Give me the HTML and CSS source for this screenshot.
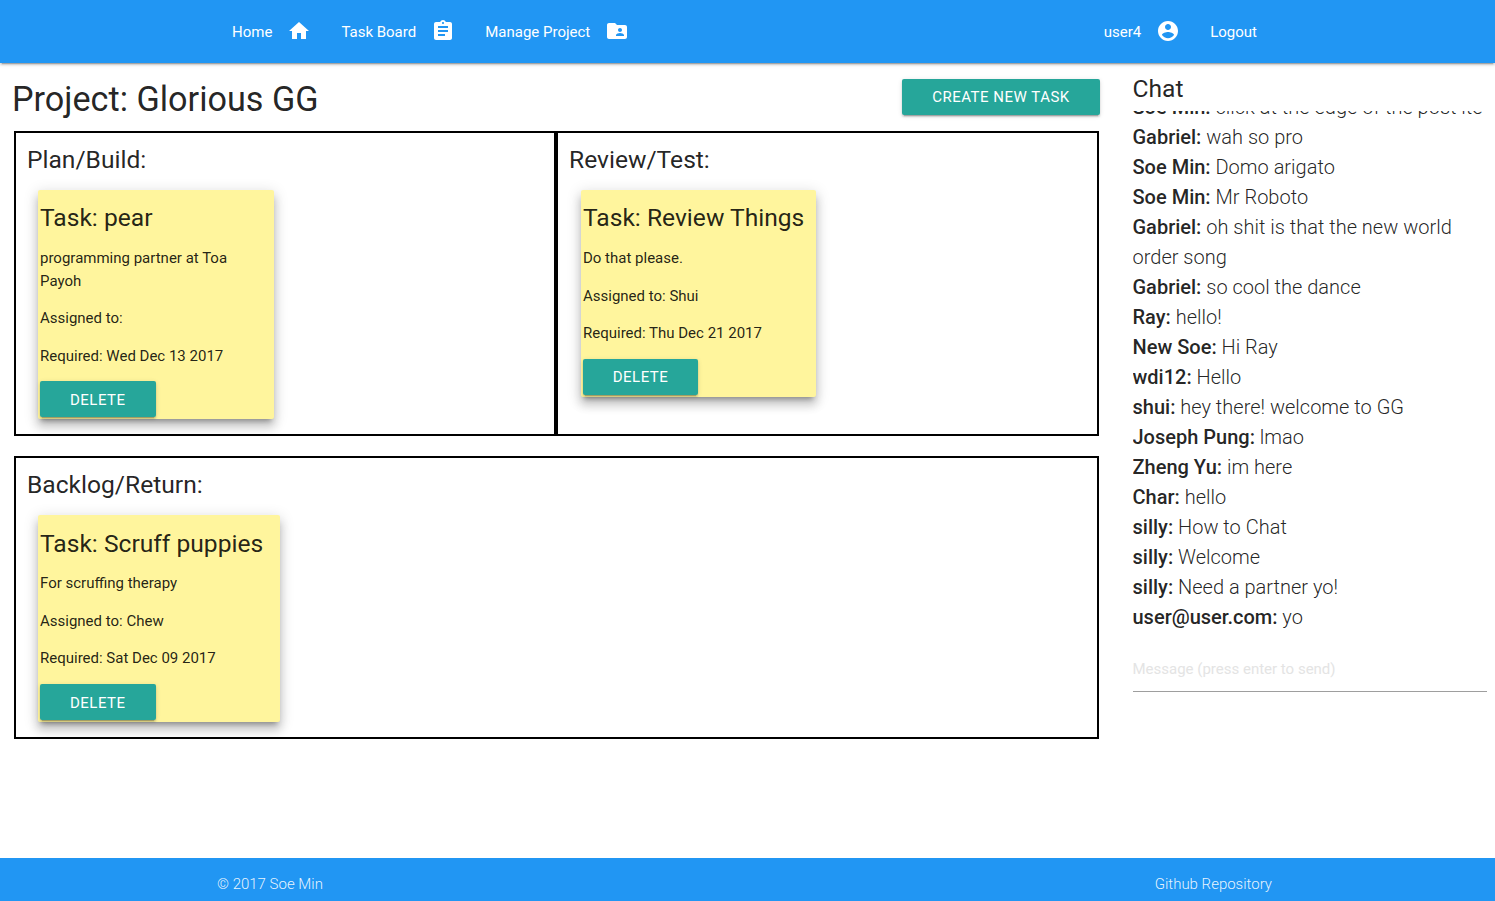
FILE: index.html
```html
<!DOCTYPE html>
<html lang="en">
<head>
    <meta charset="UTF-8">
    <meta name="viewport" content="width=device-width, initial-scale=1.0">
    <title>Project: Glorious GG</title>
    <link rel="stylesheet" href="styles.css">
</head>
<body>
    <nav class="topnav">
        <ul class="nav-list">
            <li><a href="#">Home
                <svg class="nav-icon" viewBox="0 0 24 24"><path d="M10 20v-6h4v6h5v-8h3L12 3 2 12h3v8z"/></svg></a></li>
            <li><a href="#">Task Board
                <svg class="nav-icon" viewBox="0 0 24 24"><path d="M19 3h-4.18C14.4 1.84 13.3 1 12 1c-1.3 0-2.4.84-2.82 2H5c-1.1 0-2 .9-2 2v14c0 1.1.9 2 2 2h14c1.1 0 2-.9 2-2V5c0-1.1-.9-2-2-2zm-7 0c.55 0 1 .45 1 1s-.45 1-1 1-1-.45-1-1 .45-1 1-1zm2 14H7v-2h7v2zm3-4H7v-2h10v2zm0-4H7V7h10v2z"/></svg></a></li>
            <li><a href="#">Manage Project
                <svg class="nav-icon" viewBox="0 0 24 24"><path d="M20 6h-8l-2-2H4c-1.1 0-1.99.9-1.99 2L2 18c0 1.1.9 2 2 2h16c1.1 0 2-.9 2-2V8c0-1.1-.9-2-2-2zm-5 3c1.1 0 2 .9 2 2s-.9 2-2 2-2-.9-2-2 .9-2 2-2zm4 8h-8v-1c0-1.33 2.67-2 4-2s4 .67 4 2v1z"/></svg></a></li>
        </ul>
        <ul class="nav-list">
            <li><a href="#">user4
                <svg class="nav-icon" viewBox="0 0 24 24"><path d="M12 2C6.48 2 2 6.48 2 12s4.48 10 10 10 10-4.48 10-10S17.52 2 12 2zm0 3c1.66 0 3 1.34 3 3s-1.34 3-3 3-3-1.34-3-3 1.34-3 3-3zm0 14.2c-2.5 0-4.71-1.28-6-3.22.03-1.99 4-3.08 6-3.08 1.99 0 5.97 1.09 6 3.08-1.29 1.94-3.5 3.22-6 3.22z"/></svg></a></li>
            <li><a href="#">Logout</a></li>
        </ul>
    </nav>

    <main class="page">
        <section class="board">
            <div class="board-head">
                <h1>Project: Glorious GG</h1>
                <button class="btn btn-create" type="button">Create new task</button>
            </div>

            <div class="lane-row">
                <div class="lane">
                    <h2>Plan/Build:</h2>
                    <div class="task">
                        <h3>Task: pear</h3>
                        <p>programming partner at Toa Payoh</p>
                        <p>Assigned to:</p>
                        <p>Required: Wed Dec 13 2017</p>
                        <button class="btn" type="button">Delete</button>
                    </div>
                </div>
                <div class="lane lane-right">
                    <h2>Review/Test:</h2>
                    <div class="task">
                        <h3>Task: Review Things</h3>
                        <p>Do that please.</p>
                        <p>Assigned to: Shui</p>
                        <p>Required: Thu Dec 21 2017</p>
                        <button class="btn" type="button">Delete</button>
                    </div>
                </div>
            </div>

            <div class="lane lane-backlog">
                <h2>Backlog/Return:</h2>
                <div class="task task-wide">
                    <h3>Task: Scruff puppies</h3>
                    <p>For scruffing therapy</p>
                    <p>Assigned to: Chew</p>
                    <p>Required: Sat Dec 09 2017</p>
                    <button class="btn" type="button">Delete</button>
                </div>
            </div>
        </section>

        <aside class="chat">
            <h2>Chat</h2>
            <div class="messages">
                <p><b>Soe Min:</b> click at the edge of the post ite</p>
                <p><b>Gabriel:</b> wah so pro</p>
                <p><b>Soe Min:</b> Domo arigato</p>
                <p><b>Soe Min:</b> Mr Roboto</p>
                <p><b>Gabriel:</b> oh shit is that the new world order song</p>
                <p><b>Gabriel:</b> so cool the dance</p>
                <p><b>Ray:</b> hello!</p>
                <p><b>New Soe:</b> Hi Ray</p>
                <p><b>wdi12:</b> Hello</p>
                <p><b>shui:</b> hey there! welcome to GG</p>
                <p><b>Joseph Pung:</b> lmao</p>
                <p><b>Zheng Yu:</b> im here</p>
                <p><b>Char:</b> hello</p>
                <p><b>silly:</b> How to Chat</p>
                <p><b>silly:</b> Welcome</p>
                <p><b>silly:</b> Need a partner yo!</p>
                <p><b>user@user.com:</b> yo</p>
            </div>
            <input class="chat-input" type="text" placeholder="Message (press enter to send)">
        </aside>
    </main>

    <footer class="foot">
        <span>© 2017 Soe Min</span>
        <a href="#">Github Repository</a>
    </footer>
</body>
</html>
```

FILE: styles.css
```css
html {
    font-size: 15px;
}
body {
    margin: 0;
    min-height: 901px;
    display: flex;
    flex-direction: column;
    font-family: Roboto, sans-serif;
    color: rgba(0, 0, 0, 0.87);
    line-height: 1.5;
    background-color: #fff;
}
.topnav {
    height: 63px;
    flex: none;
    display: flex;
    justify-content: space-between;
    padding: 0 223px 0 217px;
    background-color: #2196f3;
    box-shadow: 0 2px 2px 0 rgba(0, 0, 0, 0.14), 0 1px 5px 0 rgba(0, 0, 0, 0.12), 0 3px 1px -2px rgba(0, 0, 0, 0.2);
}
.nav-list {
    display: flex;
    margin: 0;
    padding: 0;
    list-style: none;
}
.nav-list a {
    display: flex;
    align-items: center;
    height: 64px;
    padding: 0 15px;
    color: white;
    text-decoration: none;
}
.nav-icon {
    width: 24px;
    height: 24px;
    margin: 0 0 2px 15px;
    fill: white;
}
.page {
    flex: 1;
    display: flex;
}
.board {
    width: 1100px;
    padding-left: 14px;
    box-sizing: border-box;
}
.board-head {
    height: 68px;
    display: flex;
    justify-content: space-between;
    align-items: flex-start;
}
.board-head h1 {
    margin: 18px 0 0 -2px;
    font-size: 34.2px;
    font-weight: 400;
    line-height: 1.1;
}
.btn {
    display: block;
    width: 115.6px;
    height: 36px;
    padding: 2px 0 0;
    border: none;
    border-radius: 2px;
    background-color: #26a69a;
    color: white;
    font-family: inherit;
    font-size: 15px;
    letter-spacing: 0.5px;
    text-transform: uppercase;
    box-shadow: 0 2px 2px 0 rgba(0, 0, 0, 0.14), 0 1px 5px 0 rgba(0, 0, 0, 0.12), 0 3px 1px -2px rgba(0, 0, 0, 0.2);
}
.btn-create {
    width: 198px;
    margin-top: 16px;
    padding-top: 0;
}
.lane-row {
    display: flex;
}
.lane {
    box-sizing: border-box;
    width: 542px;
    padding: 0 11px 15px;
    border: 2px solid black;
}
.lane-right {
    width: 543px;
}
.lane-backlog {
    width: 1085px;
    margin-top: 20px;
}
.lane h2 {
    margin: 0;
    padding: 12.5px 0 17.5px;
    font-size: 24.6px;
    font-weight: 400;
    line-height: 27px;
}
.task {
    box-sizing: border-box;
    width: 235.6px;
    margin-left: 11px;
    padding: 2px;
    border-radius: 2px;
    background-color: #fff59d;
    box-shadow: 0 8px 10px 1px rgba(0, 0, 0, 0.14), 0 3px 14px 2px rgba(0, 0, 0, 0.12), 0 5px 5px -3px rgba(0, 0, 0, 0.3);
}
.lane-right .task {
    width: 235px;
    margin-left: 12px;
}
.lane-right .btn {
    width: 115px;
    padding-top: 0;
}
.task-wide {
    width: 242px;
}
.task h3 {
    margin: 12px 0 16px;
    font-size: 24.6px;
    font-weight: 400;
    line-height: 27px;
}
.task-wide h3 {
    margin: 13px 0 15px;
}
.task p {
    margin: 15px 0;
}
.task p:last-of-type {
    margin-bottom: 14px;
}
.chat {
    flex: 1;
    min-width: 0;
    display: flex;
    flex-direction: column;
    padding: 0 8px 0 32.5px;
}
.chat h2 {
    margin: 12px 0 0;
    font-size: 24.6px;
    font-weight: 400;
    line-height: 27px;
}
.messages {
    height: 521px;
    margin-top: 9px;
    display: flex;
    flex-direction: column;
    justify-content: flex-end;
    overflow: hidden;
    font-size: 20px;
    font-weight: 300;
}
.messages p {
    flex: none;
    margin: 0;
    line-height: 30px;
}
.messages b {
    font-weight: 500;
}
.chat-input {
    box-sizing: border-box;
    height: 45px;
    margin-top: 15px;
    padding: 0;
    border: none;
    border-bottom: 1px solid #9e9e9e;
    outline: none;
    font-family: inherit;
    font-size: 15px;
}
.chat-input::placeholder {
    color: #e4e4e4;
}
.foot {
    height: 43px;
    flex: none;
    display: flex;
    justify-content: space-between;
    align-items: center;
    padding: 9px 223px 0 217px;
    box-sizing: border-box;
    background-color: #2196f3;
    color: rgba(255, 255, 255, 0.9);
    font-weight: 300;
}
.foot a {
    color: rgba(255, 255, 255, 0.9);
    text-decoration: none;
}
```
